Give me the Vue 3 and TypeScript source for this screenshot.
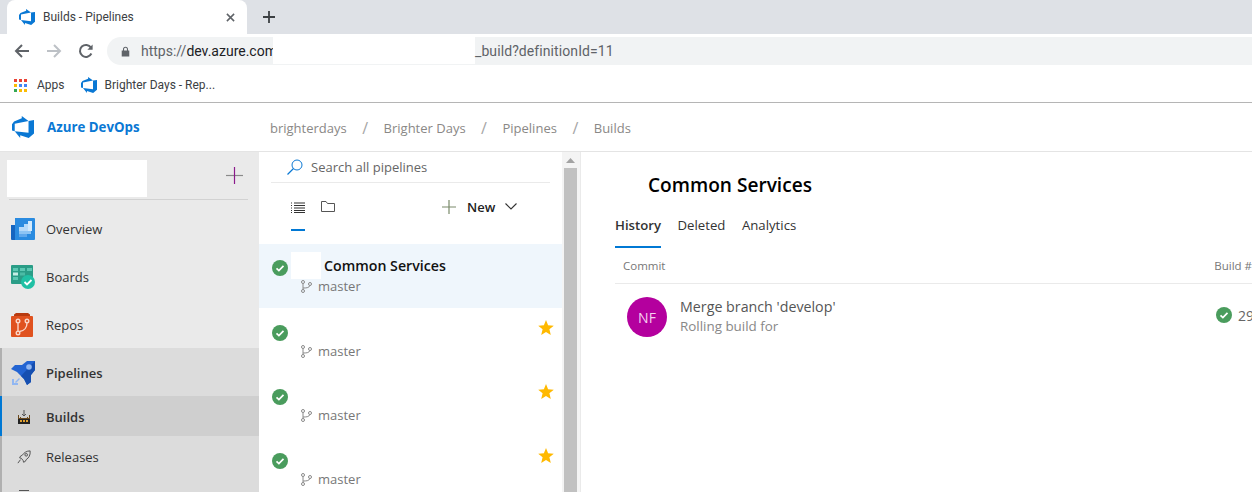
<script setup lang="ts">
const pipelines = [
  { name: 'Common Services', selected: true, star: false },
  { name: '', selected: false, star: true },
  { name: '', selected: false, star: true },
  { name: '', selected: false, star: true },
]
const logo = 'M0 8.877L2.247 5.91l8.405-3.416V.022l7.37 5.393L2.966 8.338v8.225L0 15.707zm24-4.45v14.651l-5.753 4.9-9.303-3.057v3.056l-5.978-7.416 15.057 1.798V5.415z'
const crumbs = ['brighterdays', 'Brighter Days', 'Pipelines', 'Builds']
</script>

<template>
  <div class="page">
    <div class="tabstrip">
      <div class="tab">
        <svg class="tab-logo" viewBox="0 0 24 24"><path :d="logo" fill="#0a78d4" /></svg>
        <span class="tab-title">Builds - Pipelines</span>
        <svg class="tab-close" viewBox="0 0 10 10"><path d="M1 1l8 8M9 1l-8 8" stroke="#5f6368" stroke-width="1.7" /></svg>
      </div>
      <svg class="new-tab" viewBox="0 0 12 12"><path d="M6 0v12M0 6h12" stroke="#3c4043" stroke-width="1.8" /></svg>
    </div>

    <div class="toolbar">
      <svg class="nav" viewBox="0 0 16 16"><path d="M15 8H2M8 2L2 8l6 6" fill="none" stroke="#5f6368" stroke-width="2" /></svg>
      <svg class="nav" viewBox="0 0 16 16"><path d="M1 8h13M8 2l6 6-6 6" fill="none" stroke="#bdc1c6" stroke-width="2" /></svg>
      <svg class="nav" viewBox="0 0 16 16"><path d="M13.4 10.5A6 6 0 1 1 13 4.6" fill="none" stroke="#5f6368" stroke-width="2" /><path d="M14.6 1.5v5.2H9.4z" fill="#5f6368" /></svg>
      <div class="omnibox">
        <svg class="lock" viewBox="0 0 10 12"><path d="M2.2 5V3.4a2.8 2.8 0 0 1 5.6 0V5H9.2v6.5H.8V5zM3.4 5h3.2V3.4a1.6 1.6 0 0 0-3.2 0z" fill="#5f6368" /></svg>
        <span class="url-start"><span class="url-scheme">https://</span>dev.azure.com</span>
        <span class="url-mask"></span>
        <span class="url-end">_build?definitionId=11</span>
      </div>
    </div>

    <div class="bookmarks">
      <svg class="apps" viewBox="0 0 13 13">
        <rect x="0" y="0" width="3" height="3" fill="#ea4335" /><rect x="5" y="0" width="3" height="3" fill="#ea4335" /><rect x="10" y="0" width="3" height="3" fill="#ea4335" />
        <rect x="0" y="5" width="3" height="3" fill="#fbbc04" /><rect x="5" y="5" width="3" height="3" fill="#4285f4" /><rect x="10" y="5" width="3" height="3" fill="#4285f4" />
        <rect x="0" y="10" width="3" height="3" fill="#34a853" /><rect x="5" y="10" width="3" height="3" fill="#fbbc04" /><rect x="10" y="10" width="3" height="3" fill="#fbbc04" />
      </svg>
      <span class="bm-text">Apps</span>
      <svg class="bm-logo" viewBox="0 0 24 24"><path :d="logo" fill="#0a78d4" /></svg>
      <span class="bm-text">Brighter Days - Rep...</span>
    </div>

    <header class="app-header">
      <div class="brand">
        <svg class="brand-logo" viewBox="0 0 24 24"><path :d="logo" fill="#0a78d4" /></svg>
        <span class="brand-name">Azure DevOps</span>
      </div>
      <nav class="crumbs">
        <template v-for="(c, i) in crumbs" :key="c">
          <span v-if="i > 0" class="sep">/</span>
          <span>{{ c }}</span>
        </template>
      </nav>
    </header>

    <div class="main">
      <aside class="sidebar">
        <div class="project">
          <div class="project-mask"></div>
          <svg class="project-add" viewBox="0 0 17 17"><path d="M0 8.5h17" stroke="#8a8a8a" stroke-width="1.2" /><path d="M8.5 0v17" stroke="#8b1a8b" stroke-width="1.2" /></svg>
        </div>
        <div class="nav-item">
          <svg class="nav-icon" viewBox="0 0 24 24">
            <path d="M0 8h6v15H1a1 1 0 0 1-1-1z" fill="#1565c0" />
            <path d="M4 1h19a1 1 0 0 1 1 1v20a1 1 0 0 1-1 1H4z" fill="#2a8be0" />
            <path d="M8 14h12v3H8z" fill="#8cc4f4" />
            <path d="M8 10h5v4H8zM13 7h4v7h-4z" fill="#b5dafa" />
            <path d="M17 4h4v10h-4z" fill="#d3eafc" />
            <path d="M8 17h8v3H8z" fill="#5fa8ec" />
          </svg>
          <span>Overview</span>
        </div>
        <div class="nav-item">
          <svg class="nav-icon" viewBox="0 0 24 24">
            <rect x="0" y="0" width="22" height="19" rx="1" fill="#2a9d87" />
            <path d="M2 3h5v3H2zM9 3h5v3H9zM16 3h5v3h-5z" fill="#5cc8b3" />
            <path d="M2 7.5h5v3H2z" fill="#c5eee6" />
            <path d="M9 7.5h5v3H9z" fill="#4bbba5" />
            <path d="M2 12h5v3H2z" fill="#5cc8b3" />
            <circle cx="17" cy="17" r="7" fill="#20c0a4" />
            <path d="M13.5 17l2.5 2.5 4.5-4.5" fill="none" stroke="#fff" stroke-width="1.8" />
          </svg>
          <span>Boards</span>
        </div>
        <div class="nav-item">
          <svg class="nav-icon" viewBox="0 0 24 24">
            <path d="M3 3V1.500L5 0h12l2 1.500V3z" fill="#b83b10" />
            <path d="M1 3h20a1 1 0 0 1 1 1v19a1 1 0 0 1-1 1H1a1 1 0 0 1-1-1V4a1 1 0 0 1 1-1z" fill="#e0521f" />
            <g fill="none" stroke="#fbd6c8" stroke-width="1.4">
              <circle cx="7" cy="8" r="1.800" /><circle cx="7" cy="20" r="1.800" /><circle cx="16" cy="8" r="1.800" />
              <path d="M7 9.800v8.400M8.500 18.500c5-1 7.500-3 7.500-8.700" />
            </g>
          </svg>
          <span>Repos</span>
        </div>
        <div class="nav-group">
          <div class="nav-item group-head">
            <svg class="nav-icon" viewBox="0 0 24 24">
              <path d="M24 0v9l-4 5v7l-4 3-3-6-7-7-6-3 4-4h7l5-4z" fill="#2364d2" />
              <path d="M24 0v9l-4 5v7l-4 3-3-6-3-3L24 0z" fill="#164fb0" />
              <circle cx="18" cy="6" r="2.800" fill="#91b7f2" />
              <path d="M1 24v-6h2v4h4v2zM4 21l4-4 1 1-4 4z" fill="#91b7f2" />
            </svg>
            <span>Pipelines</span>
          </div>
          <div class="nav-sub active">
            <svg class="sub-icon" viewBox="0 0 14 14">
              <path d="M7 0v6M5 4l2 2 2-2" fill="none" stroke="#555" stroke-width="1" />
              <path d="M1 5v9h12V5l-1 0v3h-1V7h-1v1H4V7H3v1H2V5z" fill="#6b4a1e" />
              <path d="M1 9h12v5H1z" fill="#222" />
              <path d="M3 10h2v2H3zM6 10h2v2H6zM9 10h2v2H9z" fill="#e0a030" />
            </svg>
            <span>Builds</span>
          </div>
          <div class="nav-sub">
            <svg class="sub-icon" viewBox="0 0 16 16">
              <path d="M15 1c-4 0-7 2-9 5L4 7l-1 2 2 .5L7 12l.5 2 2-1 1-2c3-2 5-5 4.500-10z" fill="none" stroke="#444" stroke-width="1" />
              <circle cx="10.500" cy="5.500" r="1.500" fill="none" stroke="#444" />
              <path d="M4 11l-3 4" stroke="#444" />
            </svg>
            <span>Releases</span>
          </div>
          <div class="nav-sub">
            <svg class="sub-icon" viewBox="0 0 14 14"><path d="M2 .5h10M2 3h10v10H2z" fill="none" stroke="#555" stroke-width="1" /></svg>
          </div>
        </div>
      </aside>

      <section class="list-pane">
        <div class="list-col">
          <div class="search">
            <svg class="search-icon" viewBox="0 0 16 16"><circle cx="10" cy="6" r="5" fill="none" stroke="#0a78d4" stroke-width="1" /><path d="M6.500 9.500L.5 15.500" stroke="#0a78d4" stroke-width="1.200" /></svg>
            <span>Search all pipelines</span>
          </div>
          <div class="view-tabs">
            <div class="view-tab">
              <svg class="list-icon" viewBox="0 0 14 11"><path d="M3 1h11M3 3.500h11M3 6h11M3 8.500h11M3 10.500h11" stroke="#333" stroke-width="1.200" /><path d="M0 1h2M0 3.500h2M0 6h2M0 8.500h2M0 10.500h2" stroke="#333" stroke-width="1" stroke-dasharray="1 1" /></svg>
            </div>
            <svg class="folder-icon" viewBox="0 0 14 11"><path d="M.5 10.500V.5h4.500l1.500 2h7v8z" fill="none" stroke="#555" stroke-width="1" /></svg>
            <div class="new-btn">
              <svg class="new-plus" viewBox="0 0 14 14"><path d="M7 0v14M0 7h14" stroke="#7a8a6a" stroke-width="1.200" /></svg>
              <span>New</span>
              <svg class="new-chev" viewBox="0 0 12 7"><path d="M.5.5L6 6l5.500-5.500" fill="none" stroke="#333" stroke-width="1.100" /></svg>
            </div>
          </div>
          <div v-for="(p, i) in pipelines" :key="i" class="row" :class="{ selected: p.selected }">
            <div class="row-top">
              <svg class="check" viewBox="0 0 16 16"><circle cx="8" cy="8" r="8" fill="#4a9c5d" /><path d="M4.500 8.300l2.400 2.300 4.600-4.800" fill="none" stroke="#fff" stroke-width="1.700" /></svg>
              <span v-if="p.selected" class="row-mask"></span>
              <span class="row-name">{{ p.name }}</span>
              <svg v-if="p.star" class="star" viewBox="0 0 16 15"><path d="M8 0l2.100 5.300 5.700.4-4.400 3.600 1.400 5.600L8 11.900l-4.800 3 1.400-5.600L.2 5.700l5.700-.4z" fill="#ffb900" /></svg>
            </div>
            <div class="row-branch">
              <svg class="branch" viewBox="0 0 11 13"><g fill="none" stroke="#8a8a8a" stroke-width="1"><circle cx="2" cy="2" r="1.500" /><circle cx="2" cy="11" r="1.500" /><circle cx="9" cy="4" r="1.500" /><path d="M2 3.500v6M2 8c3 0 6 0 7-2.500" /></g></svg>
              <span>master</span>
            </div>
          </div>
        </div>
        <div class="scrollbar">
          <svg class="scroll-up" viewBox="0 0 9 5"><path d="M4.500 0L9 5H0z" fill="#a3a3a3" /></svg>
          <div class="scroll-thumb"></div>
        </div>
      </section>

      <section class="detail">
        <h1 class="title">Common Services</h1>
        <div class="tabs">
          <span class="dtab current">History</span>
          <span class="dtab">Deleted</span>
          <span class="dtab">Analytics</span>
        </div>
        <div class="table-head">
          <span>Commit</span>
          <span class="build-col">Build #</span>
        </div>
        <div class="commit">
          <div class="avatar">NF</div>
          <div class="commit-text">
            <div class="commit-msg">Merge branch 'develop'</div>
            <div class="commit-sub">Rolling build for</div>
          </div>
          <div class="build-num">
            <svg class="build-check" viewBox="0 0 16 16"><circle cx="8" cy="8" r="8" fill="#4a9c5d" /><path d="M4.500 8.300l2.400 2.300 4.600-4.800" fill="none" stroke="#fff" stroke-width="1.700" /></svg>
            <span>29</span>
          </div>
        </div>
      </section>
    </div>
  </div>
</template>

<style>
html, body {
  margin: 0;
  overflow: hidden;
}
</style>

<style scoped>
.page {
  width: 1252px;
  height: 492px;
  overflow: hidden;
  background: #fff;
  display: flex;
  flex-direction: column;
  font-family: "Open Sans", "Noto Sans", sans-serif;
  color: #333;
}

.tabstrip {
  height: 34px;
  background: #dee1e6;
  display: flex;
  align-items: center;
  padding-left: 7px;
  flex-shrink: 0;
}

.tab {
  width: 240px;
  height: 34px;
  background: #fff;
  border-radius: 8px 8px 0 0;
  display: flex;
  align-items: center;
  padding: 0 12px;
  box-sizing: border-box;
}

.tab-logo {
  width: 16px;
  height: 16px;
}

.tab-title {
  flex: 1;
  margin-left: 8px;
  font: 12px Roboto, sans-serif;
  color: #3c4043;
}

.tab-close {
  width: 9px;
  height: 9px;
}

.new-tab {
  width: 12px;
  height: 12px;
  margin-left: 16px;
}

.toolbar {
  height: 34px;
  display: flex;
  align-items: center;
  padding-left: 14px;
  flex-shrink: 0;
}

.nav {
  width: 16px;
  height: 16px;
  margin-right: 16px;
}

.omnibox {
  flex: 1;
  height: 28px;
  margin-left: -3px;
  background: #f1f3f4;
  border-radius: 14px 0 0 14px;
  display: flex;
  align-items: center;
  padding-left: 14px;
  font: 14px Roboto, sans-serif;
  color: #5f6368;
}

.lock {
  width: 9px;
  height: 11px;
  margin-right: 11px;
}

.url-start {
  width: 132px;
  overflow: hidden;
  white-space: nowrap;
  color: #202124;
}

.url-scheme {
  color: #5f6368;
}

.url-mask {
  width: 202px;
  height: 27px;
  margin-top: -1px;
  background: #fff;
}

.url-end {
  letter-spacing: 0.09px;
}

.bookmarks {
  height: 34px;
  display: flex;
  align-items: center;
  padding-left: 14px;
  font: 12px Roboto, sans-serif;
  color: #3c4043;
  border-bottom: 1px solid #b5b5b5;
  flex-shrink: 0;
}

.apps {
  width: 13px;
  height: 13px;
  margin-right: 10px;
}

.bm-logo {
  width: 16px;
  height: 16px;
  margin: 0 8px 0 16px;
}

.bm-text {
  white-space: nowrap;
}

.app-header {
  height: 48px;
  display: flex;
  align-items: center;
  border-bottom: 1px solid #e4e4e4;
  flex-shrink: 0;
}

.brand {
  width: 270px;
  display: flex;
  align-items: center;
  padding-left: 12px;
  box-sizing: border-box;
}

.brand-logo {
  width: 22px;
  height: 22px;
}

.brand-name {
  margin-left: 13px;
  font-size: 13.3px;
  font-weight: 700;
  color: #0a78d4;
}

.crumbs {
  display: flex;
  align-items: center;
  margin-top: 1px;
  font-size: 13px;
  color: #8a8886;
}

.sep {
  margin: 0 15.5px;
  font-size: 16px;
  color: #a6a6a6;
}

.main {
  flex: 1;
  min-height: 0;
  display: flex;
}

.sidebar {
  width: 259px;
  flex-shrink: 0;
  background: #eaeaea;
  font-size: 13px;
  color: #333;
}

.project {
  height: 39px;
  margin: 0 11px 5px 9px;
  border-bottom: 1px solid #d2d2d2;
  display: flex;
  align-items: flex-start;
  justify-content: space-between;
  padding-top: 8px;
}

.project-mask {
  width: 140px;
  height: 37px;
  margin-left: -2px;
  background: #fff;
}

.project-add {
  width: 17px;
  height: 17px;
  margin: 7px 5px 0 0;
}

.nav-item {
  height: 48px;
  padding-left: 11px;
  display: flex;
  align-items: center;
  gap: 11px;
}

.nav-icon {
  width: 24px;
  height: 24px;
}

.nav-group {
  margin-top: -1px;
  background: #dcdcdc;
  border-left: 2px solid #b0b0b0;
}

.group-head {
  padding-left: 9px;
  padding-top: 2px;
  box-sizing: border-box;
  font-weight: 600;
}

.nav-sub {
  height: 40px;
  display: flex;
  align-items: center;
  padding: 2px 0 0 15px;
  box-sizing: border-box;
  gap: 15px;
}

.nav-sub.active {
  background: #cfcfcf;
  margin-left: -2px;
  border-left: 2px solid #0078d4;
  font-weight: 600;
}

.sub-icon {
  width: 14px;
  height: 14px;
}

.list-pane {
  width: 322px;
  flex-shrink: 0;
  display: flex;
  border-right: 1px solid #eaeaea;
  box-sizing: border-box;
}

.list-col {
  width: 303px;
  flex-shrink: 0;
}

.search {
  height: 30px;
  margin: 0 12px;
  border-bottom: 1px solid #eaeaea;
  display: flex;
  align-items: center;
  padding-left: 16px;
  gap: 8px;
  font-size: 13px;
  color: #666;
}

.search-icon {
  width: 16px;
  height: 16px;
}

.view-tabs {
  height: 61px;
  padding-left: 32px;
  display: flex;
  align-items: flex-start;
  box-sizing: border-box;
  padding-top: 17px;
}

.view-tab {
  width: 14px;
  height: 27px;
  border-bottom: 2px solid #0078d4;
  margin-right: 16px;
  display: flex;
  align-items: flex-start;
  padding-top: 2px;
}

.list-icon {
  width: 14px;
  height: 11px;
}

.folder-icon {
  width: 14px;
  height: 11px;
  margin-top: 1px;
}

.new-btn {
  display: flex;
  align-items: center;
  margin: -2px 0 0 107px;
  font-size: 13px;
  font-weight: 600;
  color: #222;
}

.new-plus {
  width: 14px;
  height: 14px;
  margin-right: 11px;
}

.new-chev {
  width: 12px;
  height: 7px;
  margin: -2px 0 0 10px;
}

.row {
  height: 64px;
  padding: 12px 8px 0 13px;
  box-sizing: border-box;
}

.row.selected {
  background: #eff6fc;
}

.row-top {
  display: flex;
  align-items: flex-start;
  height: 21px;
  position: relative;
}

.selected .row-top {
  height: 20px;
}

.check {
  width: 16px;
  height: 16px;
  flex-shrink: 0;
  margin-top: 5px;
}

.selected .check {
  margin-top: 4px;
}

.row-mask {
  width: 30px;
  height: 27px;
  margin: -4px 3px 0 3px;
  background: #fff;
}

.row-name {
  font-size: 14.2px;
  font-weight: 600;
  color: #111;
  line-height: 19px;
  white-space: nowrap;
}

.star {
  position: absolute;
  right: 0;
  top: 0;
  width: 16px;
  height: 15px;
}

.row-branch {
  display: flex;
  align-items: center;
  padding-left: 29px;
  margin-top: 1px;
  font-size: 13px;
  color: #777;
  gap: 6px;
}

.branch {
  width: 11px;
  height: 13px;
}

.scrollbar {
  width: 18px;
  padding-left: 2px;
  box-sizing: border-box;
  background: #f4f4f4;
  display: flex;
  flex-direction: column;
  align-items: flex-start;
}

.scroll-up {
  width: 9px;
  height: 5px;
  margin: 6px 0 5px 2px;
}

.scroll-thumb {
  flex: 1;
  width: 13px;
  background: #c1c1c1;
}

.detail {
  flex: 1;
  min-width: 0;
  padding: 20px 0 0 34px;
}

.title {
  margin: 0 0 0 33px;
  font-size: 19.1px;
  line-height: 26px;
  font-weight: 600;
  color: #000;
}

.tabs {
  display: flex;
  gap: 16.5px;
  margin-top: 18px;
  font-size: 13.2px;
  color: #333;
}

.dtab {
  padding-bottom: 12px;
  line-height: 18px;
  white-space: nowrap;
}

.dtab.current {
  font-weight: 600;
  border-bottom: 2px solid #0078d4;
}

.table-head {
  height: 35px;
  border-bottom: 1px solid #eaeaea;
  display: flex;
  align-items: center;
  padding-left: 8px;
  font-size: 11.5px;
  color: #777;
}

.build-col {
  margin-left: auto;
  flex-shrink: 0;
  white-space: nowrap;
}

.commit {
  display: flex;
  align-items: center;
  padding: 13px 0 0 12px;
}

.avatar {
  width: 40px;
  height: 40px;
  border-radius: 50%;
  background: #b4009e;
  color: #f5d0f0;
  display: flex;
  align-items: center;
  justify-content: center;
  font-size: 14px;
  flex-shrink: 0;
}

.commit-text {
  margin-left: 13px;
  margin-top: -2px;
}

.commit-msg {
  font-size: 14.25px;
  color: #555;
  line-height: 19px;
}

.commit-sub {
  margin-top: 1px;
  font-size: 13.4px;
  color: #888;
  line-height: 19px;
}

.build-num {
  margin: -4px -2px 0 auto;
  display: flex;
  align-items: center;
  gap: 6px;
  font-size: 14px;
  color: #666;
}

.build-check {
  width: 16px;
  height: 16px;
}
</style>
